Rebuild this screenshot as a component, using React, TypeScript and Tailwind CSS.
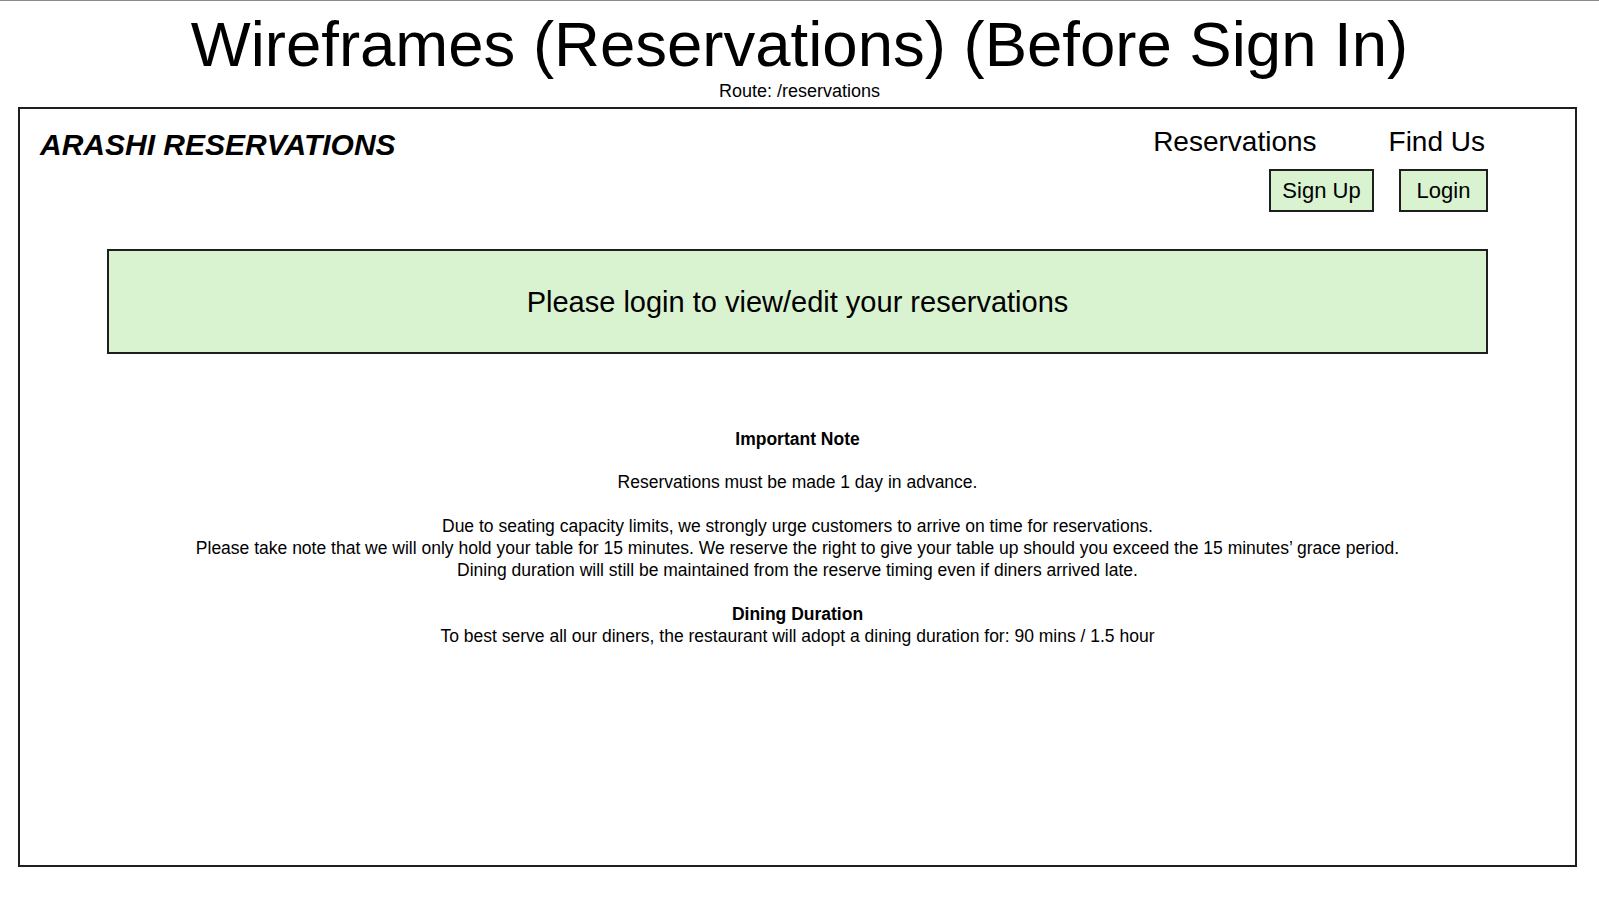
import React from "react";

const navLinks = ["Reservations", "Find Us"];

const noteLines = [
  "Due to seating capacity limits, we strongly urge customers to arrive on time for reservations.",
  "Please take note that we will only hold your table for 15 minutes. We reserve the right to give your table up should you exceed the 15 minutes\u2019 grace period.",
  "Dining duration will still be maintained from the reserve timing even if diners arrived late.",
];

const App = () => {
  return (
    <div
      className="w-[1599px] h-[899px] bg-white border-t border-[#8a8a8a] text-black overflow-hidden"
      style={{ fontFamily: '"Liberation Sans", Arial, sans-serif' }}
    >
      {/* page title */}
      <div className="flex flex-col items-center">
        <h1 className="text-[63.5px] leading-[72px] mt-[7px]">
          Wireframes (Reservations) (Before Sign In)
        </h1>
        <p className="text-[18px] leading-[20px] mt-[1px]">Route: /reservations</p>
      </div>

      {/* wireframe frame */}
      <div className="ml-[18px] mt-[6px] w-[1559px] h-[760px] border-2 border-[#1f1f1f] flex flex-col">
        <div className="flex justify-between pl-[20px] pr-[87px] pt-[17px]">
          <div className="text-[30px] leading-[34px] font-bold italic mt-[2px]">ARASHI RESERVATIONS</div>
          <div className="flex flex-col items-end">
            <div className="flex gap-[72px] pr-[3px]">
              {navLinks.map((link) => (
                <span key={link} className="text-[28px] leading-[32px]">
                  {link}
                </span>
              ))}
            </div>
            <div className="flex gap-[25px] mt-[11px]">
              <button className="w-[105px] h-[43px] border-2 border-[#1f1f1f] bg-[#d9f2d0] text-[22px]">
                Sign Up
              </button>
              <button className="w-[89px] h-[43px] border-2 border-[#1f1f1f] bg-[#d9f2d0] text-[22px]">
                Login
              </button>
            </div>
          </div>
        </div>

        <div className="mx-[87px] mt-[37px] h-[105px] border-2 border-[#1f1f1f] bg-[#d9f2d0] flex items-center justify-center">
          <p className="text-[29px] mt-[2px]">Please login to view/edit your reservations</p>
        </div>

        <div className="mt-[74px] flex flex-col items-center text-[17.5px] leading-[22px] text-center">
          <p className="font-bold">Important Note</p>
          <p className="mt-[21px]">Reservations must be made 1 day in advance.</p>
          <div className="mt-[22px]">
            {noteLines.map((line) => (
              <p key={line}>{line}</p>
            ))}
          </div>
          <p className="font-bold mt-[22px]">Dining Duration</p>
          <p>To best serve all our diners, the restaurant will adopt a dining duration for: 90 mins / 1.5 hour</p>
        </div>
      </div>
    </div>
  );
};

export default App;
